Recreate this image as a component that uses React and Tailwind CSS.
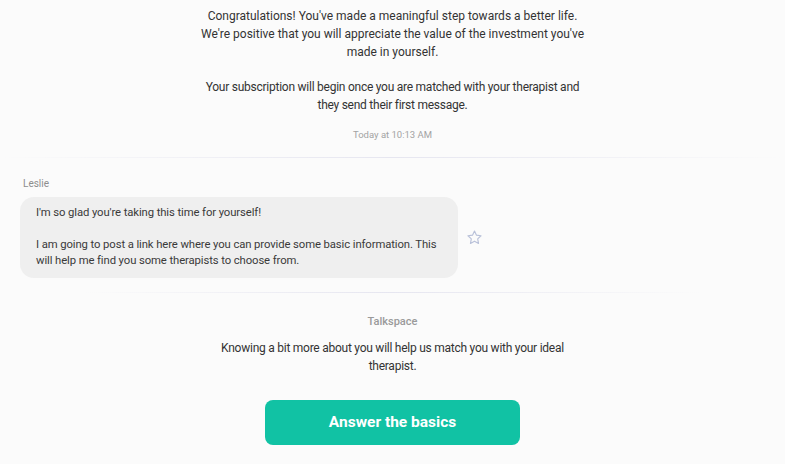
import React from 'react';

function Divider({ className }) {
  return (
    <div className={`h-px bg-gradient-to-r from-transparent via-[#e6e6f0] to-transparent ${className}`} />
  );
}

function StarIcon() {
  return (
    <svg width="17" height="17" viewBox="0 0 24 24" fill="none" stroke="#b9c1d9" strokeWidth="1.6" strokeLinejoin="round">
      <path d="M12 2.8l2.8 5.9 6.4.8-4.7 4.4 1.2 6.4L12 17.2l-5.7 3.1 1.2-6.4-4.7-4.4 6.4-.8z" />
    </svg>
  );
}

export default function App() {
  return (
    <div className="w-[785px] h-[464px] overflow-hidden bg-[#fbfbfb] font-['Roboto',sans-serif] text-[#333]">
      {/* System message */}
      <div className="pt-[7px] flex flex-col items-center">
        <div className="max-w-[395px] text-center text-[12px] leading-[18px]">
          <p>Congratulations! You've made a meaningful step towards a better life. We're positive that you will appreciate the value of the investment you've made in yourself.</p>
          <p className="mt-[17px] tracking-[-0.25px]">Your subscription will begin once you are matched with your therapist and they send their first message.</p>
        </div>
        <div className="mt-[15px] text-[9.5px] leading-[12px] text-[#a3a3a3]">Today at 10:13 AM</div>
      </div>

      <Divider className="mt-[16px]" />

      {/* Leslie bubble */}
      <div className="pl-[20px] pt-[20px]">
        <div className="pl-[3px] text-[10px] leading-[12px] text-[#8d8d8d]">Leslie</div>
        <div className="mt-[7px] flex items-center">
          <div className="w-[438px] rounded-[14px] bg-[#efefef] px-[16px] pt-[8px] pb-[9px] text-[11.3px] tracking-[-0.1px] leading-[16px] text-[#3a3a3a]">
            <p>I'm so glad you're taking this time for yourself!</p>
            <p className="mt-[16px]">I am going to post a link here where you can provide some basic information. This will help me find you some therapists to choose from.</p>
          </div>
          <div className="ml-[8px]">
            <StarIcon />
          </div>
        </div>
      </div>

      <Divider className="mt-[14px] mx-[85px]" />

      {/* Talkspace message */}
      <div className="flex flex-col items-center pt-[22px]">
        <div className="text-[11px] leading-[14px] font-medium text-[#9a9a9a]">Talkspace</div>
        <div className="mt-[10px] max-w-[385px] text-center text-[12px] leading-[18px] tracking-[-0.25px]">
          Knowing a bit more about you will help us match you with your ideal therapist.
        </div>
        <button className="mt-[25px] w-[255px] h-[45px] rounded-[8px] bg-[#11c2a4] text-white text-[15.5px] font-bold">
          Answer the basics
        </button>
      </div>
    </div>
  );
}
